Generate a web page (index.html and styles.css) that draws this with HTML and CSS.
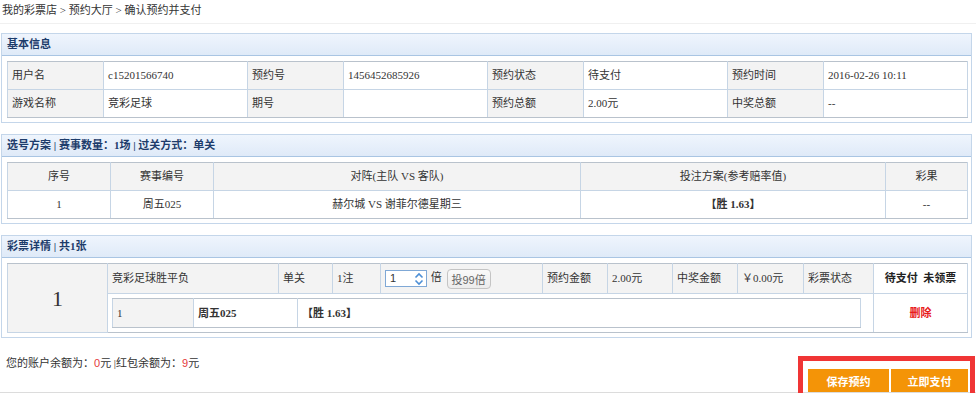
FILE: index.html
```html
<!DOCTYPE html>
<html lang="zh-CN">
<head>
    <meta charset="UTF-8">
    <title>确认预约并支付</title>
    <link rel="stylesheet" href="styles.css">
</head>
<body>
    <div class="crumb">我的彩票店 &gt; 预约大厅 &gt; 确认预约并支付</div>

    <div class="panel">
        <div class="panel-hd">基本信息</div>
        <div class="panel-bd">
            <table class="grid info">
                <colgroup>
                    <col class="c-lab"><col class="c-val"><col class="c-lab"><col class="c-val">
                    <col class="c-lab"><col class="c-val"><col class="c-lab"><col class="c-val">
                </colgroup>
                <tr>
                    <th>用户名</th><td>c15201566740</td>
                    <th>预约号</th><td>1456452685926</td>
                    <th>预约状态</th><td>待支付</td>
                    <th>预约时间</th><td>2016-02-26 10:11</td>
                </tr>
                <tr>
                    <th>游戏名称</th><td>竞彩足球</td>
                    <th>期号</th><td></td>
                    <th>预约总额</th><td>2.00元</td>
                    <th>中奖总额</th><td>--</td>
                </tr>
            </table>
        </div>
    </div>

    <div class="panel">
        <div class="panel-hd">选号方案 | 赛事数量：1场 | 过关方式：单关</div>
        <div class="panel-bd">
            <table class="grid plan">
                <colgroup>
                    <col style="width:103px"><col style="width:103px"><col style="width:367px">
                    <col style="width:305px"><col style="width:82px">
                </colgroup>
                <tr>
                    <th>序号</th><th>赛事编号</th><th>对阵(主队 VS 客队)</th><th>投注方案(参考赔率值)</th><th>彩果</th>
                </tr>
                <tr>
                    <td>1</td><td>周五025</td><td>赫尔城 VS 谢菲尔德星期三</td><td><b>【胜 1.63】</b></td><td>--</td>
                </tr>
            </table>
        </div>
    </div>

    <div class="panel">
        <div class="panel-hd">彩票详情 | 共1张</div>
        <div class="panel-bd">
            <table class="grid ticket">
                <colgroup>
                    <col style="width:100px"><col style="width:171px"><col style="width:54px">
                    <col style="width:48px"><col style="width:162px"><col style="width:65px">
                    <col style="width:65px"><col style="width:65px"><col style="width:66px">
                    <col style="width:70px"><col style="width:94px">
                </colgroup>
                <tr class="t-top">
                    <th rowspan="2" class="t-no">1</th>
                    <th>竞彩足球胜平负</th>
                    <th>单关</th>
                    <th>1注</th>
                    <th class="mult">
                        <span class="num">1
                            <svg class="spin" width="10" height="14" viewBox="0 0 10 14">
                                <path d="M1.5 5.5 L5 2 L8.5 5.5" fill="none" stroke="#4d8fd6" stroke-width="1.6"/>
                                <path d="M1.5 8.5 L5 12 L8.5 8.5" fill="none" stroke="#4d8fd6" stroke-width="1.6"/>
                            </svg>
                        </span>
                        <span class="bei">倍</span>
                        <button class="btn-99">投99倍</button>
                    </th>
                    <th>预约金额</th>
                    <th>2.00元</th>
                    <th>中奖金额</th>
                    <th>￥0.00元</th>
                    <th>彩票状态</th>
                    <td class="state">待支付&nbsp;&nbsp;未领票</td>
                </tr>
                <tr class="t-bottom">
                    <td colspan="9" class="t-inner">
                        <table class="grid sub">
                            <colgroup>
                                <col style="width:81px"><col style="width:104px"><col>
                            </colgroup>
                            <tr>
                                <th>1</th>
                                <td><b>周五025</b></td>
                                <td><b>【胜 1.63】</b></td>
                            </tr>
                        </table>
                    </td>
                    <td class="del">删除</td>
                </tr>
            </table>
        </div>
    </div>

    <div class="footer">
        <div class="balance">您的账户余额为：<span class="red">0</span>元 |红包余额为：<span class="red">9</span>元</div>
        <div class="actions">
            <button class="btn-pay">保存预约</button>
            <button class="btn-pay">立即支付</button>
        </div>
    </div>
</body>
</html>
```

FILE: styles.css
```css
body {
    margin: 0;
    font: 11px/1.5 "Liberation Serif", "Noto Sans CJK SC", serif;
    color: #333;
    background: #fff;
}

.crumb {
    height: 23px;
    line-height: 20px;
    padding-left: 2px;
    border-bottom: 1px solid #f0f0f0;
    margin-bottom: 9px;
}

.panel {
    margin: 0 4px 11px 1px;
    border: 1px solid #c4d6ea;
}

.panel-hd {
    height: 21px;
    line-height: 21px;
    padding-left: 5px;
    font-weight: bold;
    color: #1d3c6b;
    background: linear-gradient(#eff5fd, #dfeaf8);
    border-bottom: 1px solid #a9c5e3;
}

.panel-bd {
    padding: 5px 4px 4px 5px;
}

.grid {
    width: 960px;
    border-collapse: collapse;
    table-layout: fixed;
}

.grid th,
.grid td {
    border: 1px solid #c6d5e5;
    padding: 0 4px;
    font-weight: normal;
    text-align: left;
    white-space: nowrap;
}

.grid th {
    background: #f3f3f3;
}

.grid td {
    background: #fff;
}

.grid > tbody > tr:first-child > * {
    border-top-color: #b9c2cc;
}

.grid > tbody > tr:last-child > * {
    border-bottom-color: #b9c2cc;
}

.info .c-lab { width: 96px; }
.info .c-val { width: 144px; }

.info tr { height: 28px; }

.plan tr { height: 28px; }

.plan th,
.plan td {
    text-align: center;
}

.ticket .t-top { height: 30px; }
.ticket .t-bottom { height: 39px; }

.ticket .t-no {
    text-align: center;
    font-size: 22px;
    font-family: "Liberation Serif", serif;
}

.ticket .state {
    text-align: center;
    font-weight: bold;
    color: #222;
}

.ticket .del {
    text-align: center;
    font-weight: bold;
    color: #e81b1b;
}

.ticket .t-inner {
    padding: 0 12px 0 4px;
}

.sub {
    width: 749px;
}

.sub tr { height: 29px; }

.sub th,
.sub td {
    border-color: #c6d5e5;
}

.mult {
    white-space: nowrap;
}

.num {
    display: inline-flex;
    align-items: center;
    justify-content: space-between;
    vertical-align: middle;
    width: 34px;
    height: 15px;
    padding: 0 2px 0 4px;
    border: 1px solid #7fa8d6;
    background: #fff;
    font-family: "Liberation Sans", sans-serif;
    font-size: 11px;
    line-height: 15px;
}

.bei {
    margin-left: 1px;
}

.btn-99 {
    height: 20px;
    padding: 0 4px;
    margin-left: 2px;
    border: 1px solid #c4c4c4;
    border-radius: 4px;
    background: linear-gradient(#fafafa, #ececec);
    color: #666;
    font: 11px "Liberation Sans", "Noto Sans CJK SC", sans-serif;
    vertical-align: middle;
}

.footer {
    display: flex;
    justify-content: space-between;
    height: 53px;
    margin-top: -10px;
    border-bottom: 1px solid #dcdcdc;
}

.balance {
    margin-top: 15px;
    padding-left: 6px;
    line-height: 18px;
}

.red {
    color: #e5383b;
    font-family: "Liberation Sans", sans-serif;
}

.actions {
    position: relative;
    align-self: flex-end;
    display: flex;
    gap: 2px;
    margin-right: 8px;
}

.actions::after {
    content: "";
    position: absolute;
    top: -13px;
    left: -10px;
    right: -7px;
    bottom: -9px;
    border: 5px solid #f03535;
}

.btn-pay {
    height: 23px;
    border: none;
    background: #f49407;
    color: #fff;
    font: bold 11px "Noto Sans CJK SC", sans-serif;
    cursor: pointer;
}

.btn-pay:first-child { width: 81px; }
.btn-pay:last-child { width: 77px; }
```
